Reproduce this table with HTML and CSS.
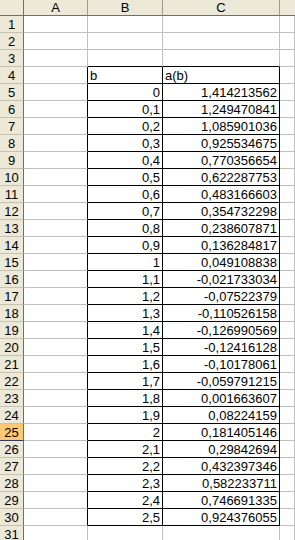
FILE: index.html
```html
<!DOCTYPE html>
<html>
<head>
<meta charset="utf-8">
<link rel="stylesheet" href="styles.css">
</head>
<body>
<div class="sheet">
  <div class="corner"></div><div class="ch">A</div><div class="ch">B</div><div class="ch">C</div><div class="ch last"></div>

  <div class="rh">1</div><div class="c"></div><div class="c"></div><div class="c"></div><div class="c"></div>
  <div class="rh">2</div><div class="c"></div><div class="c"></div><div class="c"></div><div class="c"></div>
  <div class="rh">3</div><div class="c"></div><div class="c ab"></div><div class="c ab"></div><div class="c"></div>
  <div class="rh">4</div><div class="c al"></div><div class="c bx txt">b</div><div class="c bx txt">a(b)</div><div class="c"></div>
  <div class="rh">5</div><div class="c al"></div><div class="c bx num">0</div><div class="c bx num">1,414213562</div><div class="c"></div>
  <div class="rh">6</div><div class="c al"></div><div class="c bx num">0,1</div><div class="c bx num">1,249470841</div><div class="c"></div>
  <div class="rh">7</div><div class="c al"></div><div class="c bx num">0,2</div><div class="c bx num">1,085901036</div><div class="c"></div>
  <div class="rh">8</div><div class="c al"></div><div class="c bx num">0,3</div><div class="c bx num">0,925534675</div><div class="c"></div>
  <div class="rh">9</div><div class="c al"></div><div class="c bx num">0,4</div><div class="c bx num">0,770356654</div><div class="c"></div>
  <div class="rh">10</div><div class="c al"></div><div class="c bx num">0,5</div><div class="c bx num">0,622287753</div><div class="c"></div>
  <div class="rh">11</div><div class="c al"></div><div class="c bx num">0,6</div><div class="c bx num">0,483166603</div><div class="c"></div>
  <div class="rh">12</div><div class="c al"></div><div class="c bx num">0,7</div><div class="c bx num">0,354732298</div><div class="c"></div>
  <div class="rh">13</div><div class="c al"></div><div class="c bx num">0,8</div><div class="c bx num">0,238607871</div><div class="c"></div>
  <div class="rh">14</div><div class="c al"></div><div class="c bx num">0,9</div><div class="c bx num">0,136284817</div><div class="c"></div>
  <div class="rh">15</div><div class="c al"></div><div class="c bx num">1</div><div class="c bx num">0,049108838</div><div class="c"></div>
  <div class="rh">16</div><div class="c al"></div><div class="c bx num">1,1</div><div class="c bx num">-0,021733034</div><div class="c"></div>
  <div class="rh">17</div><div class="c al"></div><div class="c bx num">1,2</div><div class="c bx num">-0,07522379</div><div class="c"></div>
  <div class="rh">18</div><div class="c al"></div><div class="c bx num">1,3</div><div class="c bx num">-0,110526158</div><div class="c"></div>
  <div class="rh">19</div><div class="c al"></div><div class="c bx num">1,4</div><div class="c bx num">-0,126990569</div><div class="c"></div>
  <div class="rh">20</div><div class="c al"></div><div class="c bx num">1,5</div><div class="c bx num">-0,12416128</div><div class="c"></div>
  <div class="rh">21</div><div class="c al"></div><div class="c bx num">1,6</div><div class="c bx num">-0,10178061</div><div class="c"></div>
  <div class="rh">22</div><div class="c al"></div><div class="c bx num">1,7</div><div class="c bx num">-0,059791215</div><div class="c"></div>
  <div class="rh">23</div><div class="c al"></div><div class="c bx num">1,8</div><div class="c bx num">0,001663607</div><div class="c"></div>
  <div class="rh">24</div><div class="c al"></div><div class="c bx num">1,9</div><div class="c bx num">0,08224159</div><div class="c"></div>
  <div class="rh sel">25</div><div class="c al"></div><div class="c bx num">2</div><div class="c bx num">0,181405146</div><div class="c"></div>
  <div class="rh">26</div><div class="c al"></div><div class="c bx num">2,1</div><div class="c bx num">0,29842694</div><div class="c"></div>
  <div class="rh">27</div><div class="c al"></div><div class="c bx num">2,2</div><div class="c bx num">0,432397346</div><div class="c"></div>
  <div class="rh">28</div><div class="c al"></div><div class="c bx num">2,3</div><div class="c bx num">0,582233711</div><div class="c"></div>
  <div class="rh">29</div><div class="c al"></div><div class="c bx num">2,4</div><div class="c bx num">0,746691335</div><div class="c"></div>
  <div class="rh">30</div><div class="c al"></div><div class="c bx num">2,5</div><div class="c bx num">0,924376055</div><div class="c"></div>
  <div class="rh">31</div><div class="c"></div><div class="c"></div><div class="c"></div><div class="c"></div>
</div>
</body>
</html>
```
FILE: styles.css
```css
html, body {
  margin: 0;
  padding: 0;
  background: #ffffff;
  overflow: hidden;
}
.sheet {
  display: grid;
  grid-template-columns: 24px 64px 75px 117px 1fr;
  grid-template-rows: 16px repeat(31, 17px);
  width: 295px;
  font-family: "Liberation Sans", Arial, sans-serif;
  font-size: 13px;
  color: #000;
}
.sheet > div {
  box-sizing: border-box;
  line-height: 16px;
  white-space: nowrap;
  overflow: hidden;
}
.corner {
  background: #ece9d8;
  border-right: 1px solid #716f64;
  border-bottom: 1px solid #716f64;
}
.ch {
  background: #ece9d8;
  border-right: 1px solid #9d9a88;
  border-bottom: 1px solid #716f64;
  text-align: center;
  line-height: 15px !important;
}
.ch.last {
  border-right: none;
}
.rh {
  background: #ece9d8;
  border-right: 1px solid #716f64;
  border-bottom: 1px solid #c5c2b2;
  text-align: center;
  padding-top: 1px;
  line-height: 15px !important;
}
.rh.sel {
  background: #ffc873;
  border-bottom: 1px solid #1f3a93;
}
.c {
  border-right: 1px solid #c0c0c0;
  border-bottom: 1px solid #c0c0c0;
  padding: 0 2px;
  padding-top: 1px;
  line-height: 15px !important;
}
.al {
  border-right-color: #000;
}
.ab {
  border-bottom-color: #000;
}
.bx {
  border-right-color: #000;
  border-bottom-color: #000;
}
.num {
  text-align: right;
}
.txt {
  text-align: left;
}
```
